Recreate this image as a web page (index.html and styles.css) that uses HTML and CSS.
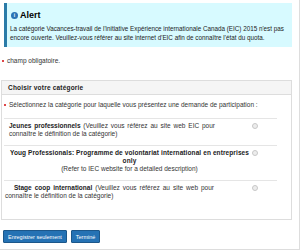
FILE: index.html
```html
<!DOCTYPE html>
<html lang="fr">
<head>
  <meta charset="UTF-8" />
  <title>Choisir votre catégorie</title>
  <link rel="stylesheet" href="styles.css">
</head>
<body>
  <div class="page">
    <!-- Alert -->
    <section class="alert">
      <h2 class="alert-title">
        <span class="alert-icon">i</span>Alert
      </h2>
      <p>La catégorie Vacances-travail de l'initiative Expérience internationale Canada (EIC) 2015 n'est pas encore ouverte. Veuillez-vous référer au site internet d'EIC afin de connaître l'état du quota.</p>
    </section>

    <p class="required"><span class="req-mark"></span>champ obligatoire.</p>

    <!-- Category panel -->
    <div class="panel">
      <div class="panel-heading">Choisir votre catégorie</div>
      <div class="panel-body">
        <p class="required"><span class="req-mark"></span>Sélectionnez la catégorie pour laquelle vous présentez une demande de participation :</p>

        <div class="choice">
          <p class="choice-text choice-yp"><strong>Jeunes professionnels</strong> (Veuillez vous référez au site web EIC pour connaître le définition de la catégorie)</p>
          <span class="radio"></span>
        </div>
        <div class="choice">
          <p class="choice-text choice-vie"><strong>Youg Professionals: Programme de volontariat international en entreprises<br>only</strong><br>(Refer to IEC website for a detailed description)</p>
          <span class="radio"></span>
        </div>
        <div class="choice">
          <p class="choice-text choice-coop"><strong>Stage coop international</strong> (Veuillez vous référez au site web pour connaître le définition de la catégorie)</p>
          <span class="radio"></span>
        </div>
      </div>
    </div>

    <div class="actions">
      <button class="btn">Enregistrer seulement</button>
      <button class="btn">Terminé</button>
    </div>
  </div>
</body>
</html>
```

FILE: styles.css
```css
/* GLOBAL */
body {
  margin: 0;
  font-family: 'Liberation Sans', Arial, sans-serif;
  font-size: 6.5px;
  line-height: 8px;
  color: #333;
  background: #fff;
}

.page {
  width: 300px;
  height: 250px;
  border-right: 1px solid #ddd;
  border-bottom: 1px solid #ddd;
  padding-top: 3px;
  box-sizing: border-box;
}

p {
  margin: 0;
}

/* ALERT */
.alert {
  margin: 0 7px 0 4px;
  padding: 7px 5px 6px 3px;
  background-color: #d7faff;
  border-left: 3px solid #2a7ba8;
  height: 44px;
  box-sizing: border-box;
}
.alert-title {
  display: flex;
  align-items: center;
  margin: 0 0 4px 1px;
  font-size: 9px;
  line-height: 10px;
  color: #000;
}
.alert-icon {
  display: inline-flex;
  align-items: center;
  justify-content: center;
  width: 7px;
  height: 7px;
  margin-right: 2px;
  border-radius: 50%;
  background: #2b73b5;
  color: #fff;
  font-size: 5px;
  font-weight: bold;
}
.alert p {
  font-size: 6.3px;
  line-height: 9px;
  color: #222;
}

/* REQUIRED MARK */
.required {
  display: flex;
  align-items: center;
  margin: 10px 0 0 2px;
}
.req-mark {
  width: 2px;
  height: 2px;
  margin-right: 3px;
  background: #d3080c;
  border-radius: 1px;
}

/* PANEL */
.panel {
  margin: 15px 7px 0 1px;
  border: 1px solid #ddd;
  height: 140px;
  box-sizing: border-box;
}
.panel-heading {
  height: 12px;
  padding: 1px 6px 0;
  background-color: #f5f5f5;
  border-bottom: 1px solid #ddd;
  font-weight: bold;
  letter-spacing: 0.2px;
  line-height: 11px;
  color: #222;
}
.panel-body {
  padding: 0 14px 0 2px;
}
.panel-body .required {
  margin: 6px 0 9px 0;
}

.choice {
  display: flex;
  align-items: flex-start;
  border-top: 1px solid #e5e5e5;
  padding: 3px 0 7px;
}
.choice-text {
  text-align: justify;
}
.choice-text strong {
  color: #222;
}
.choice-yp {
  margin-left: 5px;
  width: 206px;
}
.choice-vie {
  margin-left: 3px;
  width: 245px;
  text-align: center;
}
.choice-vie strong {
  letter-spacing: 0.1px;
}
.choice-coop {
  margin-left: 1px;
  width: 209px;
  text-indent: 9px;
}
.radio {
  width: 4px;
  height: 4px;
  margin: 1px 19px 0 auto;
  border: 1px solid #c8c8c8;
  border-radius: 50%;
  background: #ececec;
  flex-shrink: 0;
}

/* BUTTONS */
.actions {
  display: flex;
  gap: 4px;
  margin: 10px 0 0 3px;
}
.btn {
  height: 13px;
  padding: 0 4px;
  background-color: #2572b4;
  border: 1px solid #1c578a;
  border-radius: 1px;
  color: #fff;
  font-family: 'Liberation Sans', Arial, sans-serif;
  font-size: 5.5px;
}
```
